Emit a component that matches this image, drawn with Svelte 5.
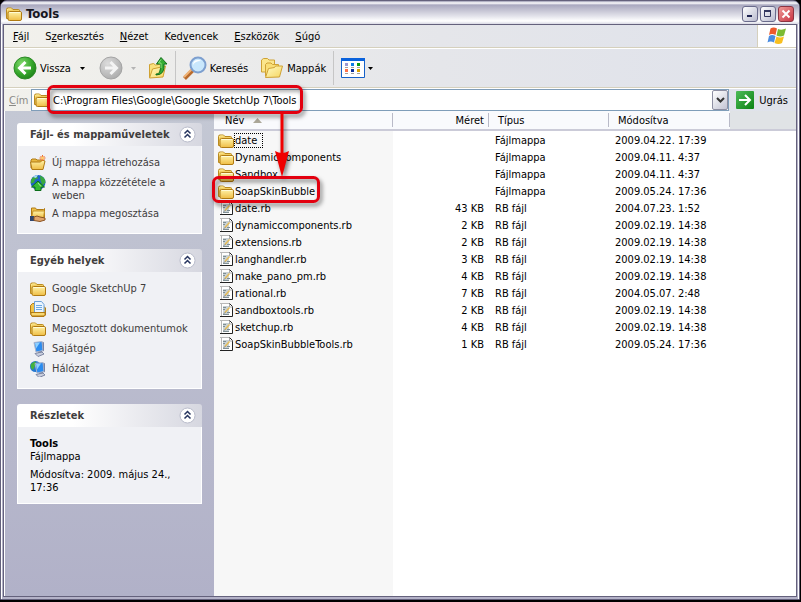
<script lang="ts">
	interface Entry {
		name: string;
		size?: string;
		modified: string;
	}

	interface Task {
		label: string;
		icon: string;
	}

	const menus = [
		["", "F", "ájl"],
		["S", "z", "erkesztés"],
		["", "N", "ézet"],
		["Ked", "v", "encek"],
		["", "E", "szközök"],
		["", "S", "úgó"],
	];

	const columns = [
		{ label: "Név", cls: "name" },
		{ label: "Méret", cls: "size" },
		{ label: "Típus", cls: "type" },
		{ label: "Módosítva", cls: "modified" },
	];

	const entries: Entry[] = [
		{ name: "date", modified: "2009.04.22. 17:39" },
		{ name: "DynamicComponents", modified: "2009.04.11. 4:37" },
		{ name: "Sandbox", modified: "2009.04.11. 4:37" },
		{ name: "SoapSkinBubble", modified: "2009.05.24. 17:36" },
		{ name: "date.rb", size: "43 KB", modified: "2004.07.23. 1:52" },
		{ name: "dynamiccomponents.rb", size: "2 KB", modified: "2009.02.19. 14:38" },
		{ name: "extensions.rb", size: "2 KB", modified: "2009.02.19. 14:38" },
		{ name: "langhandler.rb", size: "3 KB", modified: "2009.02.19. 14:38" },
		{ name: "make_pano_pm.rb", size: "4 KB", modified: "2009.02.19. 14:38" },
		{ name: "rational.rb", size: "7 KB", modified: "2004.05.07. 2:48" },
		{ name: "sandboxtools.rb", size: "2 KB", modified: "2009.02.19. 14:38" },
		{ name: "sketchup.rb", size: "4 KB", modified: "2009.02.19. 14:38" },
		{ name: "SoapSkinBubbleTools.rb", size: "1 KB", modified: "2009.05.24. 17:36" },
	];

	const fileTasks: Task[] = [
		{ label: "Új mappa létrehozása", icon: "new" },
		{ label: "A mappa közzététele a weben", icon: "web" },
		{ label: "A mappa megosztása", icon: "share" },
	];

	const places: Task[] = [
		{ label: "Google SketchUp 7", icon: "folder" },
		{ label: "Docs", icon: "docs" },
		{ label: "Megosztott dokumentumok", icon: "folder" },
		{ label: "Sajátgép", icon: "computer" },
		{ label: "Hálózat", icon: "network" },
	];

	let path = $state("C:\\Program Files\\Google\\Google SketchUp 7\\Tools");
	let selected = $state("date");
	let closed: Record<string, boolean> = $state({});
</script>

{#snippet folder()}
	<svg width="16" height="16" viewBox="0 0 16 16" aria-hidden="true">
		<path d="M.5 12.500V3.500q0-1.500 1.500-1.500h3.500l1.500 1.500h5.500q1 0 1 1v8z" fill="#f3cf62" stroke="#b98a20" />
		<path d="M1.500 4.500V3.500l1-.5h3" fill="none" stroke="#fff0a0" />
		<path d="M3.500 5.500h10.500q1.500 0 1.500 1.500v6q0 1.500-1.500 1.500H3.500q-1.500 0-1.500-1.500V7q0-1.500 1.500-1.500z" fill="url(#folderFace)" stroke="#b07a12" />
		<path d="M3.500 6.500h11" stroke="#fffbd5" />
	</svg>
{/snippet}

{#snippet script()}
	<svg width="16" height="16" viewBox="0 0 16 16" aria-hidden="true">
		<path d="M2.500.5h9l3 3v10h-12z" fill="#fff" />
		<path d="M2 .5h9.500M3.500 1v12" fill="none" stroke="#b8b8b8" />
		<path d="M11.500.5l3 3v10H2" fill="none" stroke="#222" />
		<path d="M11.500 1v3h3" fill="none" stroke="#a8a8a8" />
		<path d="M5 3h6v9H5z" fill="#c9d1d4" />
		<path d="M5 4.500h3M5 6.500h2M9 9.500h3M5 11.500h6" stroke="#7f8f94" />
		<path d="M7 9.500l4.500-5" stroke="#e6bd58" stroke-width="1.500" />
		<path d="M6 10.500l1-1" stroke="#555" />
	</svg>
{/snippet}

{#snippet taskIcon(icon: string)}
	{#if icon === "folder"}
		{@render folder()}
	{:else}
		<svg width="16" height="16" viewBox="0 0 16 16" aria-hidden="true">
			{#if icon === "new"}
				<path d="M1 13V5l1-1h4l1 1h6v8z" fill="#e8b840" stroke="#b17b14" />
				<path d="M.5 7h10l2-2 2.500 1-2 8.500H2z" fill="url(#folderFace)" stroke="#b17b14" />
				<path d="M12.500 0v6M9.500 3h6M10.500 1l4 4M14.500 1l-4 4" stroke="#ef6a2a" />
				<circle cx="12.500" cy="3" r="1.500" fill="#ffd070" />
			{:else if icon === "web"}
				<circle cx="8" cy="7.500" r="7.500" fill="#1e62c8" />
				<path d="M1 5q2-4 6-4.500l1 3-3 1-1 3-3 1zM10 .5q5.500 2 5.500 7l-3 3-2-5z" fill="#38a83e" />
				<path d="M3 2q2-2 5-2L6 3z" fill="#a8d8ff" />
				<path d="M8 6l6.500 6h-3.500v3.500H5V12H1.500z" fill="#35b935" stroke="#0b6e1a" />
				<path d="M8 8l3 3.500" stroke="#a9eb9a" />
			{:else if icon === "share"}
				<path d="M1.500 12V2h4l1 1.500h7l1-1v9z" fill="#eec04a" stroke="#b17b14" />
				<path d="M3 5h11.500l-1 7h-12z" fill="url(#folderFace)" stroke="#c59228" />
				<path d="M0 10h4v5H0z" fill="#30466f" />
				<path d="M4 11q3-2 6 0l5 1v2l-5 1.500-6-1z" fill="#e1a56c" stroke="#8a5220" />
			{:else if icon === "docs"}
				<path d="M.5 12.500v-8l2-2h3v3H14l1.500 1.500v7L14 15.500H2z" fill="#f0c34b" stroke="#b17b14" />
				<path d="M4.500.5h7l2.500 3V12h-9.500z" fill="#eaf5ff" stroke="#6aa0d8" />
				<path d="M6 4.500h6M6 6.500h6M6 8.500h6" stroke="#6fa9e2" />
				<path d="M1 11.500h14v2L14 15H2l-1-1z" fill="#f8d871" stroke="#b17b14" />
			{:else}
				{#if icon === "network"}
					<circle cx="5.500" cy="5.500" r="5.500" fill="#2577cf" />
					<path d="M.5 4q2-3.500 5.500-3.500L5 5 3 9 1 7z" fill="#43b23e" />
				{/if}
				<g transform={icon === "network" ? "translate(2 1)" : "translate(1 0)"}>
					<path d="M3 1.500l8-1 1 9-7 1.500z" fill="#2b8cf0" stroke="#a9b4cc" />
					<path d="M4 2l5-.5-4 6z" fill="#8fd0ff" />
					<path d="M11.500.5l1.500 1v9l-1-1z" fill="#7884a6" />
					<path d="M7 11l4-1 1 2-4 1z" fill="#717c9c" />
					<path d="M4 12.500l7-1.500 2 2-6 2.500z" fill="#c9cede" stroke="#7d86a2" />
				</g>
			{/if}
		</svg>
	{/if}
{/snippet}

{#snippet caret()}
	<svg class="caret" width="5" height="3" viewBox="0 0 5 3" aria-hidden="true"><path d="M0 0h5L2.500 3z" fill="currentColor" /></svg>
{/snippet}

{#snippet panelHeader(id: string, title: string)}
	<button class="panel-header" onclick={() => (closed[id] = !closed[id])} aria-expanded={!closed[id]}>
		<span>{title}</span>
		<svg width="17" height="17" viewBox="0 0 17 17" aria-hidden="true">
			<circle cx="8.500" cy="8.500" r="7.500" fill="#fff" stroke="#b9bccb" />
			<path d="M5.500 7.500l3-3 3 3M5.500 11.500l3-3 3 3" fill="none" stroke="#26345f" stroke-width="1.500" />
		</svg>
	</button>
{/snippet}

{#snippet taskList(items: Task[])}
	<ul class="panel-body tasks">
		{#each items as item}
			<li>
				{@render taskIcon(item.icon)}
				<a href="#task">{item.label}</a>
			</li>
		{/each}
	</ul>
{/snippet}

<svg class="defs" width="0" height="0" aria-hidden="true">
	<defs>
		<linearGradient id="folderFace" x1="0" y1="0" x2="0" y2="1">
			<stop offset="0" stop-color="#fff3a8" />
			<stop offset="1" stop-color="#efbd45" />
		</linearGradient>
		<linearGradient id="openFace" x1="0" y1="0" x2="1" y2="1">
			<stop offset="0" stop-color="#fffbc4" />
			<stop offset="1" stop-color="#f6d660" />
		</linearGradient>
		<radialGradient id="backFace" cx="0.35" cy="0.3" r="0.8">
			<stop offset="0" stop-color="#7fd86a" />
			<stop offset="0.6" stop-color="#34a52a" />
			<stop offset="1" stop-color="#1c7d18" />
		</radialGradient>
		<radialGradient id="forwardFace" cx="0.35" cy="0.3" r="0.8">
			<stop offset="0" stop-color="#dcdcdc" />
			<stop offset="1" stop-color="#a9a9a9" />
		</radialGradient>
		<linearGradient id="goFace" x1="0" y1="0" x2="1" y2="1">
			<stop offset="0" stop-color="#4dbb58" />
			<stop offset="1" stop-color="#0b8213" />
		</linearGradient>
	</defs>
</svg>

<div class="desktop">
	<div class="window">
		<header class="titlebar">
			{@render folder()}
			<h1>Tools</h1>
			<div class="window-buttons">
				<button aria-label="Kis méret">
					<svg width="14" height="14" viewBox="0 0 14 14"><path d="M4 8h5v2H4z" fill="#1e2350" /></svg>
				</button>
				<button aria-label="Teljes méret">
					<svg width="14" height="14" viewBox="0 0 14 14"><path d="M3.500 4.500h6v5h-6z" fill="none" stroke="#33375f" /><path d="M3 4h7" stroke="#33375f" stroke-width="2" /></svg>
				</button>
				<button class="close" aria-label="Bezárás">
					<svg width="14" height="14" viewBox="0 0 14 14"><path d="M3.500 3.500l7 7M10.500 3.500l-7 7" stroke="#fff" stroke-width="2" /></svg>
				</button>
			</div>
		</header>

		<div class="client">
			<div class="menubar">
				<nav>
					{#each menus as [before, key, after]}
						<button>{before}<u>{key}</u>{after}</button>
					{/each}
				</nav>
				<div class="flag">
					<svg width="20" height="18" viewBox="0 0 20 18" aria-hidden="true">
						<path d="M3.500 1.500q3-2 6.500 0L8.500 8q-3.500-2-6.500 0z" fill="#ee5a2b" />
						<path d="M11 2q3.500 1.500 8-.5L17 8.500q-3.500 2-7.500 0z" fill="#7cbb33" />
						<path d="M2 9q3-2 6.500 0L7 15.500q-3.500-2-6.500 0z" fill="#4a8ce0" />
						<path d="M9.500 9.500q3.500 2 7.500 0L15 16q-3.500 2-7.500 0z" fill="#f8bf20" />
					</svg>
				</div>
			</div>

			<div class="toolbar">
				<button class="back">
					<svg width="24" height="24" viewBox="0 0 24 24" aria-hidden="true">
						<circle cx="12" cy="12" r="11" fill="url(#backFace)" stroke="#2c8a26" />
						<path d="M12.500 6L6.500 12l6 6M7 12h11" fill="none" stroke="#fff" stroke-width="3" />
					</svg>
					Vissza
					{@render caret()}
				</button>
				<button class="forward" disabled aria-label="Előre">
					<svg width="24" height="24" viewBox="0 0 24 24" aria-hidden="true">
						<circle cx="12" cy="12" r="11" fill="url(#forwardFace)" stroke="#a4a4a4" />
						<path d="M11.500 6l6 6-6 6M17 12H6" fill="none" stroke="#f4f4f4" stroke-width="3" />
					</svg>
					{@render caret()}
				</button>
				<button class="up" aria-label="Fel">
					<svg width="20" height="24" viewBox="0 0 20 24" aria-hidden="true">
						<path d="M1.500 21V8.500l4-1 2 1.500 6-1V20z" fill="#f9e07c" stroke="#d0a232" />
						<path d="M1.500 22l3-9 13-3-2.500 11z" fill="url(#openFace)" stroke="#cf9f2e" />
						<path d="M8 18q5 1 4.500-10h-4L13 1.500l6 6.500h-3q1 11-8 11z" fill="#35ad36" stroke="#12701c" />
						<path d="M13 3.500L10.500 7H13v5" fill="none" stroke="#8ee07c" />
					</svg>
				</button>
				<span class="separator"></span>
				<button class="search">
					<svg width="24" height="24" viewBox="0 0 24 24" aria-hidden="true">
						<path d="M1.500 22.500l9-9" stroke="#b96b2c" stroke-width="4" />
						<path d="M1 21l8-8" stroke="#f0b477" stroke-width="2" />
						<circle cx="15" cy="9" r="7.500" fill="#c9e7fc" stroke="#7d9fcf" stroke-width="2" />
						<path d="M10 9q0-5 5-5 2 0 3 1-6 0-8 4z" fill="#fff" />
					</svg>
					Keresés
				</button>
				<button class="folders">
					<svg width="24" height="24" viewBox="0 0 24 24" aria-hidden="true">
						<path d="M1.500 16V4l2-1.500h4L9 4h5.500v12z" fill="#fbe68c" stroke="#cfa235" />
						<path d="M5.500 20V8.500L7 7h4l1.500 1.500h6V20z" fill="#f9df78" stroke="#cfa235" />
						<path d="M5.500 21.500l3-9 6-1 1-1.500h7l-3 11z" fill="url(#openFace)" stroke="#cfa235" />
					</svg>
					Mappák
				</button>
				<span class="separator"></span>
				<button class="views" aria-label="Nézetek">
					<svg width="24" height="20" viewBox="0 0 24 20" aria-hidden="true">
						<path d="M.5.5h23v19H.5z" fill="#fff" stroke="#1560c8" />
						<path d="M0 0h24v3H0z" fill="#0a62dc" />
						<path d="M4 5h3v3H4z" fill="#9a98d2" /><path d="M10 5h3v3h-3z" fill="#0b7ce6" /><path d="M16 5h3v3h-3z" fill="#0b9b16" />
						<path d="M4 11h3v3H4z" fill="#ff7148" /><path d="M10 11h3v3h-3z" fill="#0c2f9b" /><path d="M16 11h3v3h-3z" fill="#dba200" />
						<path d="M4 9.500h3M10 9.500h3M16 9.500h3M4 15.500h3M10 15.500h3M16 15.500h3" stroke="#a0a0a0" />
					</svg>
					{@render caret()}
				</button>
			</div>

			<form class="addressbar" onsubmit={(e) => e.preventDefault()}>
				<label for="address"><u>C</u>ím</label>
				<div class="address-box">
					{@render folder()}
					<input id="address" type="text" bind:value={path} spellcheck="false" />
					<button type="button" class="drop" aria-label="Előzmények">
						<svg width="9" height="6" viewBox="0 0 9 6"><path d="M1 1l3.500 3.500L8 1" fill="none" stroke="#333" stroke-width="2" /></svg>
					</button>
				</div>
				<button class="go">
					<svg width="18" height="18" viewBox="0 0 18 18" aria-hidden="true">
						<rect width="18" height="18" rx="1" fill="url(#goFace)" />
						<path d="M3 9h11M9 4l5 5-5 5" fill="none" stroke="#fff" stroke-width="2" />
					</svg>
					Ugrás
				</button>
			</form>

			<div class="content">
				<aside>
					<section>
						{@render panelHeader("tasks", "Fájl- és mappaműveletek")}
						{#if !closed.tasks}{@render taskList(fileTasks)}{/if}
					</section>
					<section>
						{@render panelHeader("places", "Egyéb helyek")}
						{#if !closed.places}{@render taskList(places)}{/if}
					</section>
					<section>
						{@render panelHeader("details", "Részletek")}
						{#if !closed.details}
							<div class="panel-body details">
								<p><strong>Tools</strong><br />Fájlmappa</p>
								<p>Módosítva: 2009. május 24., 17:36</p>
							</div>
						{/if}
					</section>
				</aside>

				<main>
					<table>
						<colgroup>
							<col class="col-name" />
							<col class="col-size" />
							<col class="col-type" />
							<col class="col-modified" />
							<col />
						</colgroup>
						<thead>
							<tr>
								{#each columns as column}
									<th class={column.cls} scope="col">
										{column.label}
										{#if column.cls === "name"}
											<svg class="sort" width="9" height="5" viewBox="0 0 9 5" aria-hidden="true"><path d="M4.500 0L9 5H0z" fill="#aca899" /></svg>
										{/if}
									</th>
								{/each}
								<td class="rest"></td>
							</tr>
						</thead>
						<tbody>
							{#each entries as entry}
								<tr onclick={() => (selected = entry.name)}>
									<td class="name">
										<div class="file">
											{#if entry.size}{@render script()}{:else}{@render folder()}{/if}
											<span class:focused={entry.name === selected}>{entry.name}</span>
										</div>
									</td>
									<td class="size">{entry.size ?? ""}</td>
									<td class="type">{entry.size ? "RB fájl" : "Fájlmappa"}</td>
									<td class="modified">{entry.modified}</td>
									<td></td>
								</tr>
							{/each}
						</tbody>
					</table>
				</main>
			</div>
		</div>
	</div>

	<svg class="callout" width="340" height="220" viewBox="0 0 340 220" aria-hidden="true">
		<g fill="none" stroke="#e3000f" stroke-width="3">
			<rect x="48.500" y="86.500" width="253" height="26" rx="5" />
			<rect x="213.500" y="177.500" width="105" height="24" rx="5" />
			<path d="M282 113v42" stroke="#f00000" />
		</g>
		<path d="M275 151q7 4 14 0l-7 26z" fill="#f00000" />
	</svg>
</div>

<style>
	:global(body) {
		margin: 0;
		background: #000;
	}

	.desktop {
		position: relative;
		display: flex;
		min-height: 100vh;
		box-sizing: border-box;
		padding: 0 1px 2px 0;
		background: #000;
		color: #000;
		font: 11px/13px Tahoma, "DejaVu Sans Condensed", sans-serif;
	}

	.defs {
		position: absolute;
	}

	svg {
		display: block;
		flex-shrink: 0;
	}

	button {
		margin: 0;
		padding: 0;
		border: none;
		background: none;
		color: inherit;
		font: inherit;
		white-space: nowrap;
	}

	.window {
		flex: 1;
		display: flex;
		flex-direction: column;
		box-sizing: border-box;
		min-width: 0;
		padding: 0 2px 2px;
		border: 1px solid #64617c;
		border-radius: 7px 7px 0 0;
		background: linear-gradient(to right, #fff 1px, #b4b2c8 1px calc(100% - 1px), #fff 0);
	}

	.titlebar {
		display: flex;
		align-items: center;
		height: 23px;
		margin: 0 -2px;
		padding: 3px 5px 0;
		box-sizing: border-box;
		border-radius: 6px 6px 0 0;
		background: linear-gradient(#9a99b2, #fff 2px, #a9a8bf 4px, #bebdce 8px, #e2e2ea 15px, #fff 20px, #d9d9e4);
	}

	h1 {
		flex: 1;
		margin: 0 0 0 4px;
		font-size: 13px;
		line-height: 16px;
		color: #16161e;
	}

	.window-buttons {
		display: flex;
		gap: 2px;
	}

	.window-buttons button {
		border: 1px solid #6a6b8c;
		border-radius: 3px;
		background: linear-gradient(135deg, #fff, #b9bace);
	}

	.window-buttons button.close {
		border-color: #8c3442;
		background: linear-gradient(135deg, #ef9a97, #c93544);
	}

	.client {
		flex: 1;
		display: flex;
		flex-direction: column;
		border: 1px solid #64617c;
		background: linear-gradient(to right, #f2f1ec, #e5e6ea 55%, #dfe2eb);
	}

	.menubar {
		display: flex;
		height: 22px;
		border-bottom: 1px solid #d5d0bd;
	}

	.menubar nav {
		flex: 1;
		display: flex;
		align-items: center;
		gap: 16px;
		padding-left: 9px;
	}

	.flag {
		display: flex;
		align-items: center;
		justify-content: center;
		width: 38px;
		border-left: 1px solid #d5d0bd;
		background: #fff;
	}

	.toolbar {
		display: flex;
		align-items: center;
		height: 38px;
		padding-left: 9px;
		border-top: 1px solid #fff;
		border-bottom: 1px solid #d5d0bd;
	}

	.toolbar button {
		display: flex;
		align-items: center;
		gap: 3px;
	}

	.toolbar .back .caret {
		margin-left: 6px;
	}

	.toolbar .forward {
		gap: 8px;
		margin-left: 14px;
		color: #b4b4b4;
	}

	.toolbar .up {
		margin-left: 12px;
	}

	.toolbar .folders {
		margin-left: 12px;
	}

	.separator {
		width: 1px;
		height: 34px;
		margin: 0 7px;
		background: #c6c6c6;
	}

	.addressbar {
		display: flex;
		align-items: center;
		height: 22px;
		border-top: 1px solid #fff;
	}

	.addressbar label {
		width: 22px;
		padding-left: 5px;
		color: #8a8a86;
	}

	.address-box {
		flex: 1;
		display: flex;
		align-items: center;
		box-sizing: border-box;
		height: 22px;
		padding-left: 2px;
		border: 1px solid #7f9db9;
		background: #fff;
	}

	.address-box input {
		flex: 1;
		min-width: 0;
		margin: 0;
		padding: 0 3px;
		border: none;
		outline: none;
		background: none;
		color: inherit;
		font: inherit;
	}

	.drop {
		display: flex;
		align-items: center;
		justify-content: center;
		box-sizing: border-box;
		width: 16px;
		height: 20px;
		border: 1px solid #8e8fa3;
		border-radius: 2px;
		background: linear-gradient(135deg, #fff, #c3c4d4);
	}

	.go {
		display: flex;
		align-items: center;
		gap: 5px;
		padding: 0 8px 0 7px;
	}

	.content {
		flex: 1;
		display: flex;
		background: #fff;
	}

	aside {
		flex: 0 0 209px;
		display: flex;
		flex-direction: column;
		gap: 15px;
		box-sizing: border-box;
		margin-left: 1px;
		padding: 12px;
		background: linear-gradient(#c4c8d4, #b1b1c8);
	}

	.panel-header {
		display: flex;
		align-items: center;
		justify-content: space-between;
		width: 100%;
		height: 23px;
		padding: 0 6px 0 13px;
		border-radius: 3px 3px 0 0;
		background: linear-gradient(to right, #fff 30%, #d6d7e0);
		color: #3f3d3d;
		font-weight: bold;
	}

	.panel-body {
		margin: 0;
		border: 1px solid #fff;
		border-top: none;
		background: #f0f1f5;
	}

	.tasks {
		display: flex;
		flex-direction: column;
		gap: 4px;
		padding: 9px 12px 11px;
		list-style: none;
	}

	.tasks li {
		display: flex;
		align-items: flex-start;
		gap: 6px;
		min-height: 16px;
	}

	.tasks a {
		margin-top: 1px;
		color: #3f3d3d;
		text-decoration: none;
	}

	.details {
		padding: 10px 12px 9px;
	}

	.details p {
		margin: 0 0 5px;
	}

	.details p:last-child {
		margin: 0;
	}

	main {
		flex: 1;
		min-width: 0;
		background: linear-gradient(to right, #f7f7f7 179px, #fff 179px);
	}

	table {
		width: 100%;
		table-layout: fixed;
		border-collapse: separate;
		border-spacing: 0;
	}

	.col-name {
		width: 179px;
	}

	.col-size {
		width: 96px;
	}

	.col-type {
		width: 120px;
	}

	.col-modified {
		width: 121px;
	}

	th,
	.rest {
		height: 18px;
		padding: 0 9px;
		border-bottom: 2px solid #cbcbd8;
		background: linear-gradient(to left, #b9bac8 1px, transparent 1px) 0 2px / 100% 14px no-repeat, #f9fafd;
		font-weight: normal;
		text-align: left;
	}

	.rest {
		background: #e0e3e6;
	}

	th.name {
		padding-left: 11px;
	}

	th.size,
	td.size {
		padding-right: 5px;
		text-align: right;
	}

	.sort {
		display: inline-block;
		margin-left: 5px;
		vertical-align: 1px;
	}

	td {
		height: 17px;
		padding: 0 6px;
		white-space: nowrap;
	}

	td.name {
		padding: 0 4px;
	}

	tbody::before {
		content: "";
		display: block;
		height: 1px;
	}

	.file {
		display: flex;
		align-items: center;
	}

	.file span {
		padding: 1px;
	}

	.file .focused {
		padding: 0 5px 0 0;
		border: 1px dotted #000;
	}

	.callout {
		position: absolute;
		top: 0;
		left: 0;
		pointer-events: none;
		filter: drop-shadow(2px 3px 2px rgba(0, 0, 0, 0.5));
	}
</style>
